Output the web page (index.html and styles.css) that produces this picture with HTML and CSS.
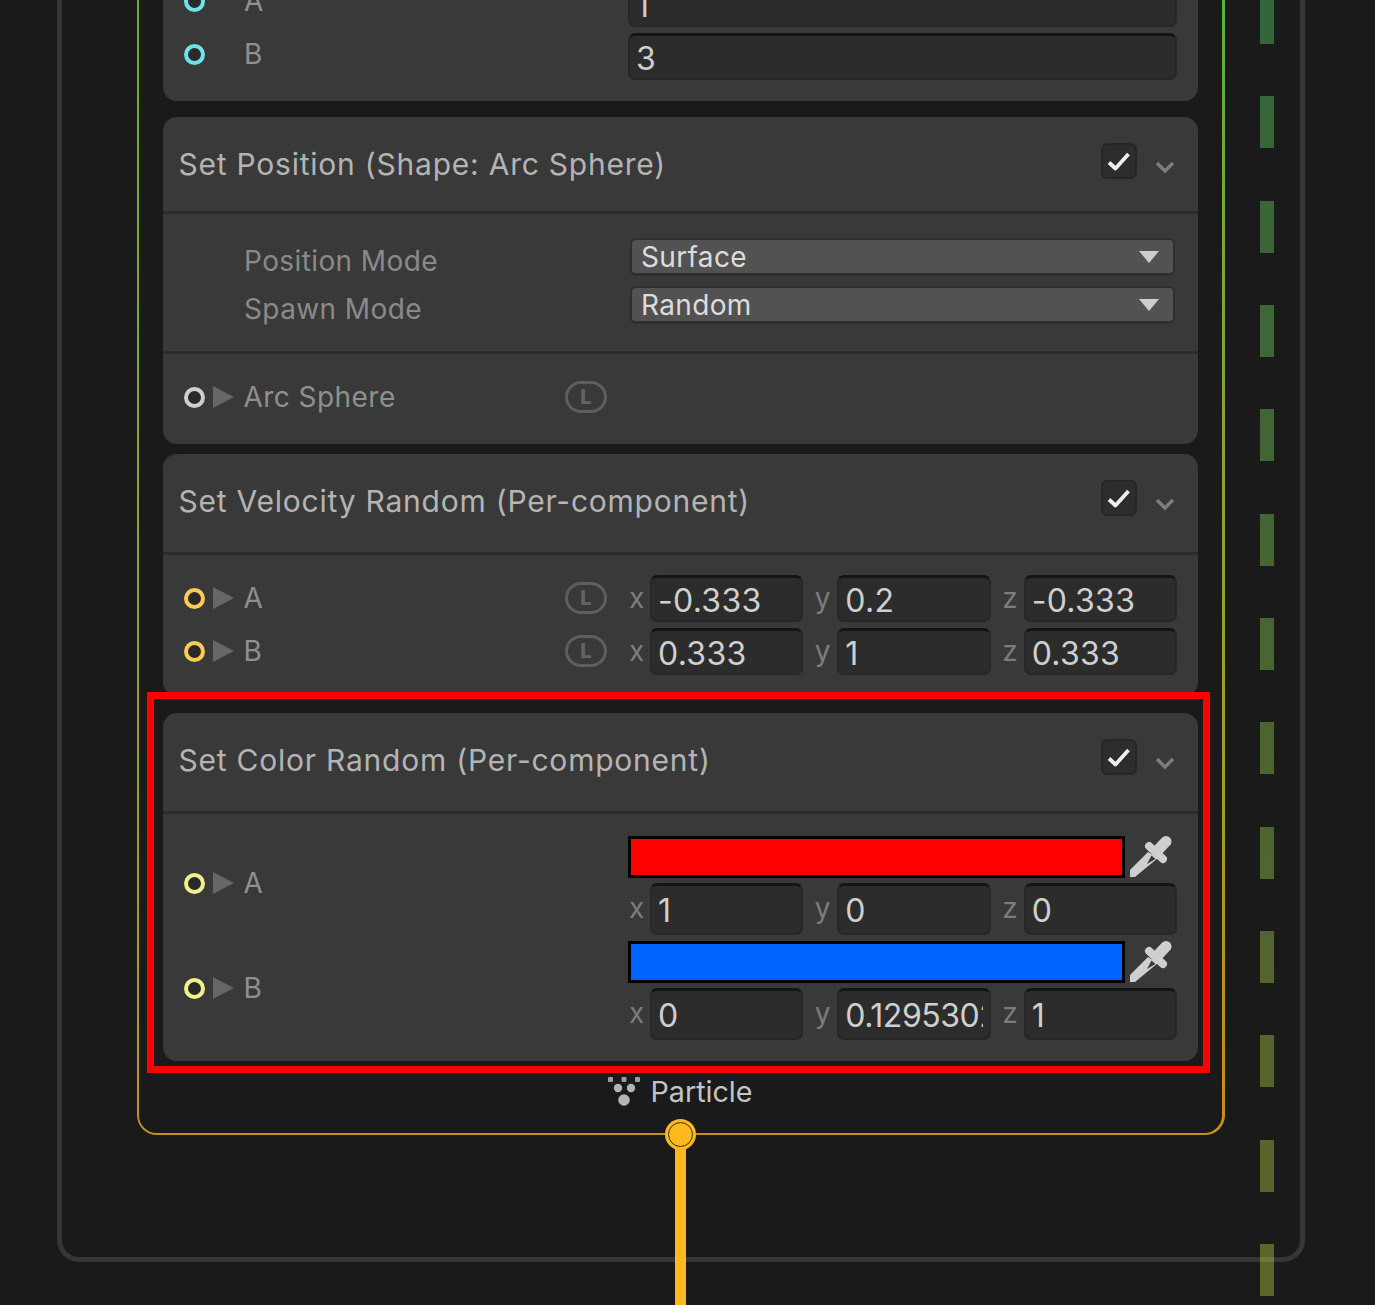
FILE: index.html
```html
<!DOCTYPE html>
<html lang="en">
<head>
<meta charset="utf-8">
<title>Set Color Random</title>
<link rel="stylesheet" href="styles.css">
</head>
<body>
<div class="stage">
  <div class="dash"></div>
  <div class="system"></div>
  <div class="context">
    <div class="context-inner">
      <section class="card card-top">
        <div class="body body-pad">
          <div class="row">
            <div class="port"><span class="socket cyan"></span><span class="tri-gap"></span><span class="label">A</span></div>
            <div class="field"><span class="val">1</span></div>
          </div>
          <div class="row">
            <div class="port"><span class="socket cyan"></span><span class="tri-gap"></span><span class="label">B</span></div>
            <div class="field"><span class="val">3</span></div>
          </div>
        </div>
      </section>

      <section class="card card-b">
        <header class="head"><h2 class="title">Set Position (Shape: Arc Sphere)</h2>
          <span class="check"><svg width="26" height="22" viewBox="0 0 26 22"><path d="M3 12.500l6.500 6L22.500 4" fill="none" stroke="#eee" stroke-width="3.800" stroke-linejoin="round"/></svg></span>
          <svg class="chev" width="20" height="14" viewBox="0 0 20 14"><path d="M2 3l8 8 8-8" fill="none" stroke="#7d7d7d" stroke-width="3.400"/></svg>
        </header>
        <div class="body settings">
          <div class="setting"><span class="setting-label">Position Mode</span><div class="drop"><span>Surface</span><i class="drop-arrow"></i></div></div>
          <div class="setting"><span class="setting-label">Spawn Mode</span><div class="drop"><span>Random</span><i class="drop-arrow"></i></div></div>
        </div>
        <div class="body arc">
          <div class="port"><span class="socket grey"></span><span class="tri"></span><span class="label">Arc Sphere</span><span class="pill">L</span></div>
        </div>
      </section>

      <section class="card card-c">
        <header class="head tall"><h2 class="title">Set Velocity Random (Per-component)</h2>
          <span class="check"><svg width="26" height="22" viewBox="0 0 26 22"><path d="M3 12.500l6.500 6L22.500 4" fill="none" stroke="#eee" stroke-width="3.800" stroke-linejoin="round"/></svg></span>
          <svg class="chev" width="20" height="14" viewBox="0 0 20 14"><path d="M2 3l8 8 8-8" fill="none" stroke="#7d7d7d" stroke-width="3.400"/></svg>
        </header>
        <div class="body body-pad">
          <div class="row">
            <div class="port"><span class="socket gold"></span><span class="tri"></span><span class="label">A</span><span class="pill">L</span></div>
            <div class="vec">
              <span class="axis">x</span><div class="field"><span class="val">-0.333</span></div>
              <span class="axis">y</span><div class="field"><span class="val">0.2</span></div>
              <span class="axis">z</span><div class="field"><span class="val">-0.333</span></div>
            </div>
          </div>
          <div class="row">
            <div class="port"><span class="socket gold"></span><span class="tri"></span><span class="label">B</span><span class="pill">L</span></div>
            <div class="vec">
              <span class="axis">x</span><div class="field"><span class="val">0.333</span></div>
              <span class="axis">y</span><div class="field"><span class="val">1</span></div>
              <span class="axis">z</span><div class="field"><span class="val">0.333</span></div>
            </div>
          </div>
        </div>
      </section>

      <section class="card card-d">
        <header class="head tall"><h2 class="title">Set Color Random (Per-component)</h2>
          <span class="check"><svg width="26" height="22" viewBox="0 0 26 22"><path d="M3 12.500l6.500 6L22.500 4" fill="none" stroke="#eee" stroke-width="3.800" stroke-linejoin="round"/></svg></span>
          <svg class="chev" width="20" height="14" viewBox="0 0 20 14"><path d="M2 3l8 8 8-8" fill="none" stroke="#7d7d7d" stroke-width="3.400"/></svg>
        </header>
        <div class="body body-color">
          <div class="row">
            <div class="port port-up"><span class="socket pale"></span><span class="tri"></span><span class="label">A</span></div>
            <div class="color-col">
              <div class="color-line">
                <div class="swatch red"></div>
                <svg class="dropper" width="42" height="42" viewBox="0 0 42 42"><path d="M0 41V34L18 16 28 22 5 41Z" fill="#cfcfcf"/><path d="M19 10L33 23" stroke="#cfcfcf" stroke-width="8" stroke-linecap="round"/><path d="M27 15L36 5.500" stroke="#cfcfcf" stroke-width="11" stroke-linecap="round"/><path d="M21.500 19.500L25.500 23 17 28Z" fill="#3a3a3a"/></svg>
              </div>
              <div class="vec big">
                <span class="axis">x</span><div class="field"><span class="val">1</span></div>
                <span class="axis">y</span><div class="field"><span class="val">0</span></div>
                <span class="axis">z</span><div class="field"><span class="val">0</span></div>
              </div>
            </div>
          </div>
          <div class="row">
            <div class="port port-up"><span class="socket pale"></span><span class="tri"></span><span class="label">B</span></div>
            <div class="color-col">
              <div class="color-line">
                <div class="swatch blue"></div>
                <svg class="dropper" width="42" height="42" viewBox="0 0 42 42"><path d="M0 41V34L18 16 28 22 5 41Z" fill="#cfcfcf"/><path d="M19 10L33 23" stroke="#cfcfcf" stroke-width="8" stroke-linecap="round"/><path d="M27 15L36 5.500" stroke="#cfcfcf" stroke-width="11" stroke-linecap="round"/><path d="M21.500 19.500L25.500 23 17 28Z" fill="#3a3a3a"/></svg>
              </div>
              <div class="vec big">
                <span class="axis">x</span><div class="field"><span class="val">0</span></div>
                <span class="axis">y</span><div class="field field-clip"><span class="val val-long">0.1295302</span></div>
                <span class="axis">z</span><div class="field"><span class="val">1</span></div>
              </div>
            </div>
          </div>
        </div>
      </section>

      <div class="data-type">
        <svg width="32" height="32" viewBox="0 0 32 32"><g fill="#9c9c9c"><rect x="0" y="2" width="5" height="5" rx="1"/><rect x="13.500" y="2" width="5" height="5" rx="1"/><rect x="27" y="2" width="5" height="5" rx="1"/></g><g fill="#b4b4b4"><circle cx="10" cy="13" r="4.200"/><circle cx="23" cy="13" r="4.200"/><circle cx="16" cy="25" r="5.800"/></g></svg>
        <span>Particle</span>
      </div>
    </div>
  </div>
  <div class="flow-line"></div>
  <div class="flow-socket"><span></span></div>
  <div class="highlight"></div>
</div>
</body>
</html>
```
FILE: styles.css
```css
* { box-sizing: border-box; }
html, body { margin: 0; padding: 0; background: #1a1a1a; }
.stage {
  position: relative;
  width: 1375px;
  height: 1305px;
  overflow: hidden;
  background: #1a1a1a;
  font-family: Inter, "Liberation Sans", sans-serif;
}
.dash {
  position: absolute;
  left: 1260px;
  top: -8px;
  width: 14px;
  height: 1313px;
  background: linear-gradient(#33663b, #5e6428);
  -webkit-mask-image: repeating-linear-gradient(#000 0, #000 52px, transparent 52px, transparent 104.33px);
  mask-image: repeating-linear-gradient(#000 0, #000 52px, transparent 52px, transparent 104.33px);
}
.system {
  position: absolute;
  left: 57px;
  top: -60px;
  width: 1248px;
  height: 1321.5px;
  border: 5px solid rgba(255, 255, 255, .125);
  border-radius: 22px;
}
.context {
  position: absolute;
  left: 136.5px;
  bottom: 170px;
  width: 1088px;
  padding: 2.5px;
  border-radius: 20px;
  background: linear-gradient(#5fae48 30px, #c29220);
}
.context-inner {
  border-radius: 17.5px;
  background: #1a1a1a;
  padding: 0 24px;
}
.card {
  background: #393939;
  border-radius: 14px;
  overflow: hidden;
}
.card-top { border-radius: 0 0 14px 14px; }
.card-b { margin-top: 16px; }
.card-c { margin-top: 10px; }
.card-d { margin-top: 17px; }
.head {
  display: flex;
  align-items: center;
  height: 97px;
  padding: 0 23px 1px 15.5px;
  border-bottom: 3px solid #2b2b2b;
}
.head.tall { height: 101px; padding-bottom: 5px; }
.title {
  flex: 1;
  margin: 0;
  font-size: 30px;
  font-weight: 400;
  letter-spacing: .77px;
  color: #b4b4b4;
  white-space: nowrap;
}
.check {
  width: 36px;
  height: 36px;
  display: flex;
  align-items: center;
  justify-content: center;
  background: #2d2d2d;
  border: 2px solid #262626;
  border-radius: 6px;
  margin-bottom: 5px;
}
.chev { margin: 7px 0 0 18px; }
.body-pad {
  display: flex;
  flex-direction: column;
  gap: 6px;
  padding: 20px 0 21px;
}
.card-top .body-pad { padding-top: 40px; }
.card-top .port { padding-bottom: 5px; }
.row {
  display: grid;
  grid-template-columns: 465px 549px;
}
.port {
  display: flex;
  align-items: center;
  padding: 0 21px 1px;
}
.port-up { padding-bottom: 5px; }
.socket {
  width: 21px;
  height: 21px;
  flex: none;
  border-radius: 50%;
  background: #2a2a2a;
  border: 4px solid #ccc;
}
.socket.cyan { border-color: #6fe1e8; }
.socket.grey { border-color: #cfcfcf; }
.socket.gold { border-color: #fbcb55; }
.socket.pale { border-color: #f2f08c; }
.tri-gap { width: 39px; flex: none; }
.tri {
  width: 0;
  height: 0;
  flex: none;
  margin: 0 9.5px 0 8px;
  border-left: 21px solid #666;
  border-top: 11px solid transparent;
  border-bottom: 11px solid transparent;
}
.label {
  font-size: 28px;
  letter-spacing: .45px;
  color: #8f8f8f;
  white-space: nowrap;
}
.pill {
  margin-left: auto;
  width: 42px;
  height: 32px;
  display: flex;
  align-items: center;
  justify-content: center;
  border: 3px solid #5e5e5e;
  border-radius: 16px;
  color: #646464;
  font-size: 20px;
  letter-spacing: 0;
  font-weight: 800;
}
.field {
  height: 47px;
  min-width: 0;
  display: flex;
  align-items: center;
  padding: 2px 4px 0 6px;
  background: #2c2c2c;
  border: 2px solid #272727;
  border-top: 3px solid #151515;
  border-radius: 7px;
}
.field-clip { padding-right: 6px; }
.val {
  display: block;
  width: 100%;
  overflow: hidden;
  font-size: 32px;
  letter-spacing: .3px;
  color: #cfcfcf;
  white-space: nowrap;
}
.val-long { letter-spacing: -.45px; }
.vec {
  display: grid;
  grid-template-columns: 22px 1fr 34px 1fr 33px 1fr;
  align-items: center;
}
.axis {
  font-size: 28px;
  color: #7c7c7c;
  text-align: left;
  padding: 0 0 2px 11.5px;
}
.axis:first-child { padding-left: 1px; }
.vec.big .field { height: 52px; }
.settings {
  display: flex;
  flex-direction: column;
  gap: 10px;
  padding: 24px 23px 27px 81px;
  border-bottom: 3px solid #2b2b2b;
}
.setting {
  display: grid;
  grid-template-columns: 386px 545px;
}
.setting-label {
  font-size: 28px;
  letter-spacing: .4px;
  color: #8a8a8a;
  padding-top: 8.5px;
  line-height: 28px;
  white-space: nowrap;
}
.drop {
  height: 38px;
  display: flex;
  align-items: center;
  justify-content: space-between;
  padding: 0 14px 0 9px;
  background: #525252;
  border: 2px solid #2f2f2f;
  border-bottom-width: 3px;
  border-radius: 6px;
  font-size: 28px;
  letter-spacing: .35px;
  color: #dcdcdc;
}
.drop-arrow {
  width: 0;
  height: 0;
  border-top: 12px solid #cdcdcd;
  border-left: 10px solid transparent;
  border-right: 10px solid transparent;
}
.arc {
  padding: 24px 0 27px;
  width: 465px;
}
.arc .port { height: 39px; }
.body-color {
  display: flex;
  flex-direction: column;
  gap: 6px;
  padding: 22px 0 21px;
}
.color-col {
  display: flex;
  flex-direction: column;
  gap: 5px;
}
.color-line {
  display: flex;
  gap: 5px;
}
.swatch {
  width: 497px;
  height: 42px;
  border: 3.5px solid #000;
}
.swatch.red { background: #ff0000; }
.swatch.blue { background: #0062ff; }
.data-type {
  display: flex;
  align-items: center;
  justify-content: center;
  gap: 10px;
  height: 71.5px;
  padding: 0 0 11px 0;
  font-size: 28.7px;
  color: #c4c4c4;
}
.flow-line {
  position: absolute;
  left: 675px;
  top: 1145px;
  width: 11px;
  height: 160px;
  background: #fdb91f;
}
.flow-socket {
  position: absolute;
  left: 665px;
  top: 1119px;
  width: 31px;
  height: 31px;
  border-radius: 50%;
  background: #fdb91f;
  display: flex;
  align-items: center;
  justify-content: center;
}
.flow-socket span {
  width: 25px;
  height: 25px;
  border-radius: 50%;
  border: 1.5px solid #3a3020;
}
.highlight {
  position: absolute;
  left: 147px;
  top: 692px;
  width: 1063px;
  height: 381px;
  border: 7px solid #ff0000;
}
```
